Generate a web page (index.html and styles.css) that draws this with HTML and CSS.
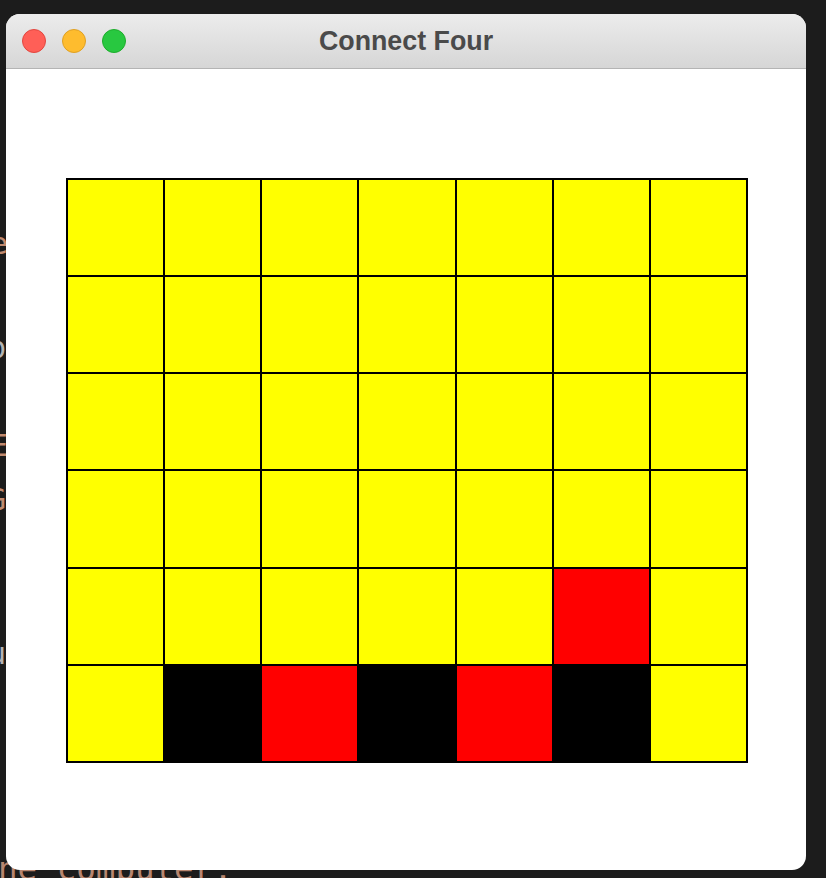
FILE: index.html
```html
<!DOCTYPE html>
<html>
<head>
<meta charset="utf-8">
<title>Connect Four</title>
<link rel="stylesheet" href="styles.css">
</head>
<body>
<div class="desktop">
  <div class="code">
    <span class="ln str l1">e</span>
    <span class="ln txt l2">p</span>
    <span class="ln str l3">E</span>
    <span class="ln str l4">G</span>
    <span class="ln txt l5">u</span>
    <span class="ln str l6">ne computer.</span>
  </div>
  <div class="window">
    <div class="titlebar">
      <div class="lights">
        <span class="light red"></span>
        <span class="light yellow"></span>
        <span class="light green"></span>
      </div>
      <div class="title">Connect Four</div>
    </div>
    <div class="content">
      <div class="board">
        <div class="cell y"></div><div class="cell y"></div><div class="cell y"></div><div class="cell y"></div><div class="cell y"></div><div class="cell y"></div><div class="cell y"></div>
        <div class="cell y"></div><div class="cell y"></div><div class="cell y"></div><div class="cell y"></div><div class="cell y"></div><div class="cell y"></div><div class="cell y"></div>
        <div class="cell y"></div><div class="cell y"></div><div class="cell y"></div><div class="cell y"></div><div class="cell y"></div><div class="cell y"></div><div class="cell y"></div>
        <div class="cell y"></div><div class="cell y"></div><div class="cell y"></div><div class="cell y"></div><div class="cell y"></div><div class="cell y"></div><div class="cell y"></div>
        <div class="cell y"></div><div class="cell y"></div><div class="cell y"></div><div class="cell y"></div><div class="cell y"></div><div class="cell r"></div><div class="cell y"></div>
        <div class="cell y"></div><div class="cell b"></div><div class="cell r"></div><div class="cell b"></div><div class="cell r"></div><div class="cell b"></div><div class="cell y"></div>
      </div>
    </div>
  </div>
</div>
</body>
</html>
```
FILE: styles.css
```css
html, body {
  margin: 0;
  padding: 0;
  background: #1c1c1c;
  width: 826px;
  height: 878px;
  overflow: hidden;
}

.desktop {
  position: relative;
  width: 826px;
  height: 878px;
  background: #1c1c1c;
  font-family: "DejaVu Sans Mono", "Liberation Mono", monospace;
}

.code {
  position: absolute;
  left: 0;
  top: 0;
  width: 826px;
  height: 878px;
}

.ln {
  position: absolute;
  font-size: 30px;
  line-height: 36px;
  white-space: pre;
}

.str { color: #c08a6f; }
.txt { color: #b4b4b4; }

.l1 { left: -10px; top: 226px; }
.l2 { left: -12px; top: 330px; }
.l3 { left: -10px; top: 428px; }
.l4 { left: -12px; top: 482px; }
.l5 { left: -12px; top: 636px; }
.l6 { left: -2px; top: 851px; font-size: 32.5px; color: #b88670; }

.window {
  position: absolute;
  left: 6px;
  top: 14px;
  width: 800px;
  height: 856px;
  border-radius: 14px;
  overflow: hidden;
  background: #ffffff;
  display: flex;
  flex-direction: column;
}

.titlebar {
  position: relative;
  height: 54px;
  flex: none;
  background: linear-gradient(to bottom, #ececec, #d6d6d6);
  border-bottom: 1px solid #b4b4b4;
  display: flex;
  align-items: center;
  justify-content: center;
}

.lights {
  position: absolute;
  left: 16px;
  top: 15px;
  display: flex;
  gap: 16px;
}

.light {
  width: 22px;
  height: 22px;
  border-radius: 50%;
  border: 1px solid transparent;
}

.light.red { background: #ff5f57; border-color: #e2463f; }
.light.yellow { background: #febc2e; border-color: #dfa023; }
.light.green { background: #28c840; border-color: #1dad2b; }

.title {
  font-family: "Liberation Sans", Arial, sans-serif;
  font-weight: bold;
  font-size: 26.8px;
  color: #4a4a4a;
  margin-left: 0;
  margin-top: 1px;
}

.content {
  flex: 1;
  padding: 109px 0 0 60px;
}

.board {
  width: 682px;
  height: 585px;
  box-sizing: border-box;
  background: #000;
  padding: 2px;
  display: grid;
  grid-template-columns: repeat(7, 1fr);
  grid-template-rows: repeat(6, 1fr);
  gap: 2px;
}

.cell.y { background: #ffff00; }
.cell.r { background: #ff0000; }
.cell.b { background: #000000; }
```
